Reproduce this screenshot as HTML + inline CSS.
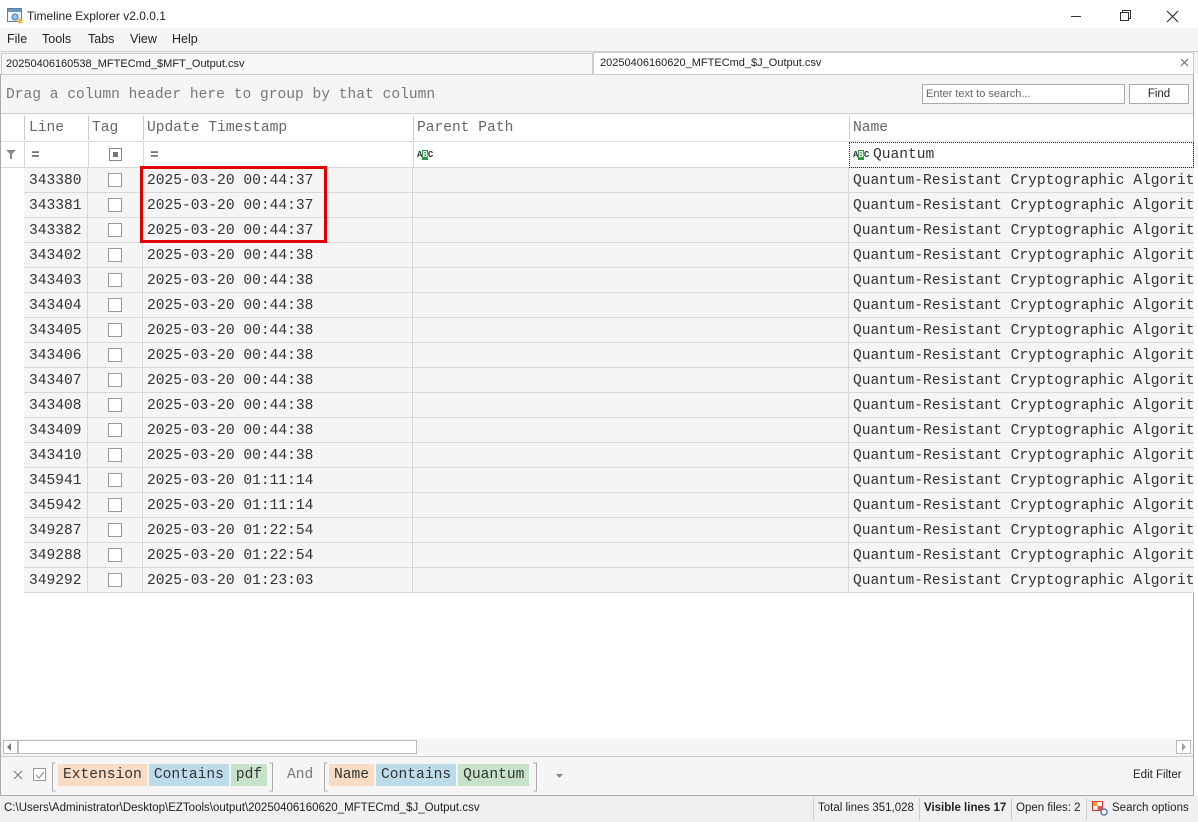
<!DOCTYPE html>
<html><head><meta charset="utf-8"><style>
*{box-sizing:border-box;margin:0;padding:0}
body{width:1198px;height:822px;position:relative;background:#fff;font-family:"Liberation Sans",sans-serif;overflow:hidden;color:#222}
.a{position:absolute}
.m{font-family:"Liberation Mono","DejaVu Sans Mono",monospace;font-size:14.6px;white-space:nowrap}
.ui{font-size:12px}
.row{position:absolute;left:24px;width:1170px;height:25px;background:#f5f5f5;border-bottom:1px solid #d8d8d8}
.c{position:absolute;top:0;height:25px;border-right:1px solid #d8d8d8;line-height:26px;color:#333;overflow:hidden}
.cb{position:absolute;left:20px;top:5px;width:14px;height:14px;border:1px solid #999;background:#fff}
.chip{display:inline-block;height:22px;line-height:22px;padding:0 5px;margin-right:2px;color:#333}
.abc{font-family:'Liberation Mono',monospace;font-size:9px;line-height:10px;color:#333;font-weight:bold}
.abc span{background:#2a9a45;color:#fff}
</style></head><body>
<div class="a" style="left:0;top:0;width:1198px;height:30px;background:#fff"></div>
<svg class="a" style="left:7px;top:8px" width="16" height="16"><rect x="0.5" y="0.5" width="14" height="13" fill="#eef4fb" stroke="#5a7fa8"/><rect x="1" y="1" width="13" height="3" fill="#6a93c3"/><circle cx="8" cy="9" r="3" fill="#9bc1e6" stroke="#4a78b0"/><circle cx="13" cy="13" r="2.5" fill="#f2b630"/></svg>
<div class="a ui" style="left:27px;top:9px;color:#222">Timeline Explorer v2.0.0.1</div>
<svg class="a" style="left:1068px;top:9px" width="120" height="14"><line x1="3" y1="7.5" x2="13" y2="7.5" stroke="#333"/><rect x="52.5" y="3.5" width="8" height="8" fill="none" stroke="#333"/><path d="M54.5 3.5V1.5H62.5V9.5H60.5" fill="none" stroke="#333"/><path d="M99 2L110 13M110 2L99 13" stroke="#333" stroke-width="1.2"/></svg>
<div class="a" style="left:0;top:28px;width:1198px;height:24px;background:#f5f5f5"></div>
<div class="a ui" style="left:7px;top:32px;font-size:12.5px">File</div>
<div class="a ui" style="left:42px;top:32px;font-size:12.5px">Tools</div>
<div class="a ui" style="left:88px;top:32px;font-size:12.5px">Tabs</div>
<div class="a ui" style="left:130px;top:32px;font-size:12.5px">View</div>
<div class="a ui" style="left:172px;top:32px;font-size:12.5px">Help</div>
<div class="a" style="left:0;top:51px;width:1198px;height:23px;background:#f5f5f5;border-top:1px solid #ccc"></div>
<div class="a" style="left:1px;top:53px;width:592px;height:21px;background:#f7f7f7;border:1px solid #ccc;border-bottom:none"></div>
<div class="a ui" style="left:6px;top:58px;font-size:11px">20250406160538_MFTECmd_$MFT_Output.csv</div>
<div class="a" style="left:593px;top:52px;width:601px;height:22px;background:#fff;border:1px solid #ccc;border-bottom:none"></div>
<div class="a ui" style="left:600px;top:57px;font-size:11px">20250406160620_MFTECmd_$J_Output.csv</div>
<svg class="a" style="left:1180px;top:58px" width="9" height="9"><path d="M1 1L8 8M8 1L1 8" stroke="#666"/></svg>
<div class="a" style="left:0;top:74px;width:1194px;height:722px;border:1px solid #aaa;border-top:1px solid #ccc"></div>
<div class="a" style="left:1px;top:75px;width:1192px;height:39px;background:#f5f5f5;border-bottom:1px solid #ccc"></div>
<div class="a m" style="left:6px;top:87px;color:#777">Drag a column header here to group by that column</div>
<div class="a" style="left:922px;top:84px;width:203px;height:20px;background:#fff;border:1px solid #aaa"></div>
<div class="a ui" style="left:926px;top:88px;color:#666;font-size:11px">Enter text to search...</div>
<div class="a" style="left:1129px;top:84px;width:60px;height:20px;background:#fff;border:1px solid #aaa;font-size:11.5px;text-align:center;line-height:18px">Find</div>
<div class="a" style="left:1px;top:114px;width:1192px;height:28px;background:#fff;border-bottom:1px solid #ddd"></div>
<div class="a" style="left:24px;top:116px;width:1px;height:24px;background:#ccc"></div>
<div class="a" style="left:88px;top:116px;width:1px;height:24px;background:#ccc"></div>
<div class="a" style="left:143px;top:116px;width:1px;height:24px;background:#ccc"></div>
<div class="a" style="left:413px;top:116px;width:1px;height:24px;background:#ccc"></div>
<div class="a" style="left:849px;top:116px;width:1px;height:24px;background:#ccc"></div>
<div class="a m" style="left:29px;top:120px;color:#666">Line</div>
<div class="a m" style="left:92px;top:120px;color:#666">Tag</div>
<div class="a m" style="left:147px;top:120px;color:#666">Update Timestamp</div>
<div class="a m" style="left:417px;top:120px;color:#666">Parent Path</div>
<div class="a m" style="left:853px;top:120px;color:#666">Name</div>
<div class="a" style="left:1px;top:142px;width:1192px;height:26px;background:#fff;border-bottom:1px solid #d8d8d8"></div>
<div class="a" style="left:24px;top:142px;width:1px;height:26px;background:#d8d8d8"></div>
<div class="a" style="left:88px;top:142px;width:1px;height:26px;background:#d8d8d8"></div>
<div class="a" style="left:143px;top:142px;width:1px;height:26px;background:#d8d8d8"></div>
<div class="a" style="left:413px;top:142px;width:1px;height:26px;background:#d8d8d8"></div>
<svg class="a" style="left:6px;top:150px" width="11" height="10"><path d="M0 0H10L6 4V9H4V4Z" fill="#888"/></svg>
<div class="a m" style="left:31px;top:148px">=</div>
<div class="a" style="left:109px;top:148px;width:13px;height:13px;border:1px solid #888;background:#fff"><div style="margin:3px;width:5px;height:5px;background:#777"></div></div>
<div class="a m" style="left:150px;top:148px">=</div>
<div class="a abc" style="left:417px;top:150px">A<span>B</span>C</div>
<div class="a" style="left:849px;top:142px;width:345px;height:26px;border:1px dotted #333"></div>
<div class="a abc" style="left:853px;top:150px">A<span>B</span>C</div>
<div class="a m" style="left:873px;top:147px;color:#333">Quantum</div>
<div id="rows"></div>
<script>
var d=[["343380","00:44:37"],["343381","00:44:37"],["343382","00:44:37"],["343402","00:44:38"],["343403","00:44:38"],["343404","00:44:38"],["343405","00:44:38"],["343406","00:44:38"],["343407","00:44:38"],["343408","00:44:38"],["343409","00:44:38"],["343410","00:44:38"],["345941","01:11:14"],["345942","01:11:14"],["349287","01:22:54"],["349288","01:22:54"],["349292","01:23:03"]];
var h="";
for(var i=0;i<d.length;i++){var y=168+i*25;
h+='<div class="row" style="top:'+y+'px"><div class="c m" style="left:0;width:64px;padding-left:5px">'+d[i][0]+'</div><div class="c" style="left:64px;width:55px"><div class="cb"></div></div><div class="c m" style="left:119px;width:270px;padding-left:4px">2025-03-20 '+d[i][1]+'</div><div class="c" style="left:389px;width:436px"></div><div class="c m" style="left:825px;width:345px;padding-left:4px;border-right:none">Quantum-Resistant Cryptographic Algorithms</div></div>';}
document.getElementById("rows").innerHTML=h;
</script>
<div class="a" style="left:140px;top:166px;width:187px;height:77px;border:3px solid #e00000"></div>
<div class="a" style="left:1px;top:739px;width:1192px;height:17px;background:#f5f5f5"></div>
<div class="a" style="left:3px;top:740px;width:15px;height:14px;border:1px solid #bbb;background:#fff"></div>
<svg class="a" style="left:7px;top:743px" width="6" height="8"><path d="M4 0V8L0 4Z" fill="#777"/></svg>
<div class="a" style="left:18px;top:740px;width:399px;height:14px;border:1px solid #bbb;background:#fff"></div>
<div class="a" style="left:1176px;top:740px;width:15px;height:14px;border:1px solid #bbb;background:#fff"></div>
<svg class="a" style="left:1182px;top:743px" width="6" height="8"><path d="M0 0V8L4 4Z" fill="#999"/></svg>
<div class="a" style="left:1px;top:756px;width:1192px;height:39px;background:#f5f5f5;border-top:1px solid #ccc"></div>
<svg class="a" style="left:13px;top:770px" width="10" height="10"><path d="M1 1L9 9M9 1L1 9" stroke="#777"/></svg>
<div class="a" style="left:33px;top:768px;width:13px;height:13px;border:1px solid #999;background:#fff"></div>
<svg class="a" style="left:35px;top:770px" width="10" height="10"><path d="M1 5L4 8L9 2" fill="none" stroke="#888"/></svg>
<svg class="a" style="left:47px;top:762px" width="500" height="30"><path d="M8.5 1H5.5V29H8.5M222.5 1H225.5V29H222.5" fill="none" stroke="#aaa"/><path d="M280.5 1H277.5V29H280.5M486.5 1H489.5V29H486.5" fill="none" stroke="#aaa"/></svg>
<div class="a m" style="left:58px;top:764px"><span class="chip" style="background:#f8dcc4">Extension</span><span class="chip" style="background:#bcdcea">Contains</span><span class="chip" style="background:#c6e2c8">pdf</span></div>
<div class="a m" style="left:287px;top:767px;color:#777">And</div>
<div class="a m" style="left:329px;top:764px"><span class="chip" style="background:#f8dcc4">Name</span><span class="chip" style="background:#bcdcea">Contains</span><span class="chip" style="background:#c6e2c8">Quantum</span></div>
<svg class="a" style="left:556px;top:774px" width="7" height="4"><path d="M0 0H7L3.5 4Z" fill="#888"/></svg>
<div class="a ui" style="left:1133px;top:769px;font-size:11.5px">Edit Filter</div>
<div class="a" style="left:0;top:796px;width:1198px;height:26px;background:#f0f0f0"></div>
<div class="a ui" style="left:4px;top:802px;font-size:11.5px">C:\Users\Administrator\Desktop\EZTools\output\20250406160620_MFTECmd_$J_Output.csv</div>
<div class="a" style="left:813px;top:798px;width:1px;height:22px;background:#ccc"></div>
<div class="a ui" style="left:818px;top:802px;font-size:11.5px">Total lines 351,028</div>
<div class="a" style="left:919px;top:798px;width:1px;height:22px;background:#ccc"></div>
<div class="a ui" style="left:924px;top:802px;font-size:11.5px;font-weight:bold">Visible lines 17</div>
<div class="a" style="left:1011px;top:798px;width:1px;height:22px;background:#ccc"></div>
<div class="a ui" style="left:1016px;top:802px;font-size:11.5px">Open files: 2</div>
<div class="a" style="left:1086px;top:798px;width:1px;height:22px;background:#ccc"></div>
<svg class="a" style="left:1092px;top:801px" width="17" height="15"><rect x="0.5" y="0.5" width="10" height="9" fill="#fff" stroke="#d33"/><rect x="1" y="1" width="4" height="4" fill="#f0a030"/><rect x="5.5" y="5" width="5" height="4" fill="#e05050"/><circle cx="12" cy="11" r="3" fill="#fff" stroke="#5577aa" stroke-width="1.5"/></svg>
<div class="a ui" style="left:1112px;top:802px;font-size:11.5px">Search options</div>
</body></html>
